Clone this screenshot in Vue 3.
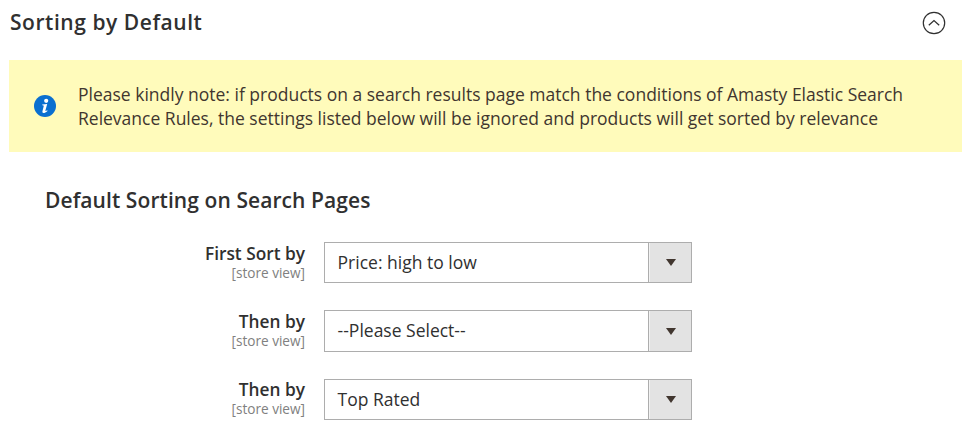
<script setup>
const rows = [
  { label: 'First Sort by', value: 'Price: high to low' },
  { label: 'Then by', value: '--Please Select--' },
  { label: 'Then by', value: 'Top Rated' }
]
</script>

<template>
  <div class="page">
    <header class="head">
      <h2 class="title">Sorting by Default</h2>
      <svg class="toggle" width="24" height="24" viewBox="0 0 24 24" fill="none" stroke="#303030">
        <circle cx="12" cy="12" r="10.7" stroke-width="1.2" />
        <path d="M6.8 14.2 L12 9.6 L17.2 14.2" stroke-width="1.3" />
      </svg>
    </header>
    <div class="notice">
      <svg class="info" width="24" height="24" viewBox="0 0 24 24">
        <circle cx="12" cy="12" r="11" fill="#0a6fd0" />
        <circle cx="13.2" cy="6.8" r="2.1" fill="#fff" />
        <path d="M9.2 10.4 L14.2 10 L12.4 16.6 C12.3 17.2 12.8 17.3 14.2 16.3 L14.5 17 C12.8 18.6 11.6 19 10.6 19 C9.5 19 9.2 18.2 9.5 17 L10.7 12.2 C10.8 11.5 10.4 11.3 9.2 11.2 Z" fill="#fff" />
      </svg>
      <p class="notice-text">Please kindly note: if products on a search results page match the conditions of Amasty Elastic Search Relevance Rules, the settings listed below will be ignored and products will get sorted by relevance</p>
    </div>
    <h3 class="subtitle">Default Sorting on Search Pages</h3>
    <div class="rows">
      <div v-for="(row, i) in rows" :key="i" class="row">
        <div class="label">
          <span class="label-main">{{ row.label }}</span>
          <span class="scope">[store view]</span>
        </div>
        <div class="select">
          <span class="select-value">{{ row.value }}</span>
          <span class="select-btn"><i class="arrow"></i></span>
        </div>
      </div>
    </div>
  </div>
</template>

<style>
html, body { margin: 0; background: #fff; }
</style>

<style scoped>
.page {
  width: 968px;
  height: 425px;
  overflow: hidden;
  box-sizing: border-box;
  padding: 0 6px 0 9px;
  font-family: "Open Sans", sans-serif;
  color: #303030;
}
.head {
  display: flex;
  justify-content: space-between;
  align-items: center;
  height: 45px;
  padding: 0 16px 0 1px;
}
.title {
  margin: -2px 0 0;
  font-size: 21px;
  font-weight: 600;
  letter-spacing: 0.55px;
  line-height: 44px;
}
.notice {
  display: flex;
  align-items: center;
  height: 92px;
  margin-top: 15px;
  padding-left: 24px;
  background: #fffbbb;
}
.info { flex: none; margin-top: -1px; }
.notice-text {
  margin: 0 0 0 21px;
  width: 860px;
  font-size: 17.5px;
  line-height: 24px;
  color: #41362f;
}
.subtitle {
  margin: 34px 0 0 36px;
  font-size: 21px;
  font-weight: 600;
  letter-spacing: 0.08px;
  line-height: 28px;
}
.rows {
  display: flex;
  flex-direction: column;
  gap: 27px;
  margin-top: 28px;
}
.row { display: flex; align-items: flex-start; }
.label {
  width: 296px;
  padding-top: 0.6px;
  box-sizing: border-box;
  display: flex;
  flex-direction: column;
  align-items: flex-end;
  flex: none;
}
.label-main {
  display: block;
  font-size: 17.3px;
  font-weight: 600;
  line-height: 22px;
}
.scope {
  display: block;
  font-size: 13.6px;
  line-height: 15px;
  color: #808080;
}
.select {
  display: flex;
  align-items: stretch;
  width: 368px;
  height: 41.4px;
  margin-left: 19px;
  box-sizing: border-box;
  border: 1px solid #adadad;
  background: #fff;
}
.select-value {
  flex: 1;
  padding-left: 12.6px;
  font-size: 17.5px;
  line-height: 39px;
  color: #303030;
}
.select-btn {
  width: 43px;
  display: flex;
  align-items: center;
  justify-content: center;
  padding-left: 2px;
  box-sizing: border-box;
  background: #e3e3e3;
  border-left: 1px solid #adadad;
  box-shadow: inset 1px 0 #f2f2f2;
}
.arrow {
  width: 0;
  height: 0;
  border-left: 5px solid transparent;
  border-right: 5px solid transparent;
  border-top: 7px solid #41362f;
}
</style>
